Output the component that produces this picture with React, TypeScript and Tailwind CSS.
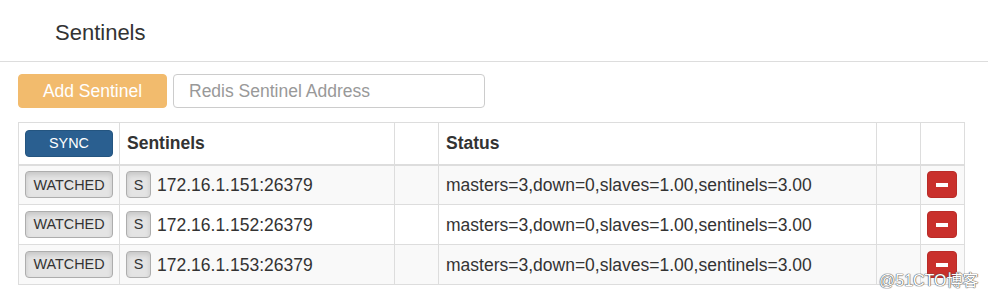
const SENTINELS = [
  { addr: "172.16.1.151:26379", status: "masters=3,down=0,slaves=1.00,sentinels=3.00" },
  { addr: "172.16.1.152:26379", status: "masters=3,down=0,slaves=1.00,sentinels=3.00" },
  { addr: "172.16.1.153:26379", status: "masters=3,down=0,slaves=1.00,sentinels=3.00" },
];

const cell = "border border-[#ddd] px-[6px] py-0 align-middle leading-[20px]";
const bodyCell = `${cell} h-[40px]`;
const headCell = `${cell} h-[42px] border-b-2`;
const grayBtn =
  "block h-[27px] rounded-[4px] border border-[#adadad] bg-[#e4e4e4] text-[14.4px] leading-none text-[#333] shadow-[inset_0_3px_5px_rgba(0,0,0,0.125)]";

const MinusButton = () => (
  <button className="flex h-[27px] w-[30px] items-center justify-center rounded-[4px] border border-[#b92c28] bg-[#c9302c]">
    <span className="block h-[4px] w-[12px] bg-white" />
  </button>
);

export default function App() {
  return (
    <div className="relative h-[300px] w-[988px] bg-white font-['Liberation_Sans',Arial,sans-serif] text-[#333]">
      <div className="h-[62px] border-b border-[#ddd] pl-[55px] pt-[22px]">
        <h1 className="text-[22px] leading-[22px] font-normal">Sentinels</h1>
      </div>

      <div className="mt-[12px] flex gap-[6px] pl-[18px]">
        <button className="h-[34px] w-[149px] rounded-[4px] border border-[#f2bb6d] bg-[#f2bb6d] text-[17.5px] text-white">
          Add Sentinel
        </button>
        <input
          className="h-[34px] w-[312px] rounded-[4px] border border-[#ccc] pl-[15px] text-[17.5px] text-[#555] outline-none placeholder:text-[#999]"
          placeholder="Redis Sentinel Address"
        />
      </div>

      <table className="mt-[14px] ml-[18px] w-[947px] table-fixed border-collapse text-[17.5px]">
        <colgroup>
          <col className="w-[101px]" />
          <col className="w-[275px]" />
          <col className="w-[44px]" />
          <col className="w-[438px]" />
          <col className="w-[44px]" />
          <col className="w-[44px]" />
        </colgroup>
        <thead>
          <tr className="bg-white">
            <th className={`${headCell} text-left`}>
              <button className="block h-[27px] w-[88px] rounded-[4px] border border-[#245580] bg-[#2a5f90] text-[14.4px] leading-none font-normal text-white">
                SYNC
              </button>
            </th>
            <th className={`${headCell} pl-[7px] text-left font-bold`}>Sentinels</th>
            <th className={headCell} />
            <th className={`${headCell} pl-[7px] text-left font-bold`}>Status</th>
            <th className={headCell} />
            <th className={headCell} />
          </tr>
        </thead>
        <tbody>
          {SENTINELS.map((s, i) => (
            <tr key={s.addr} className={i % 2 === 0 ? "bg-[#f9f9f9]" : "bg-white"}>
              <td className={bodyCell}>
                <button className={`${grayBtn} w-[88px]`}>WATCHED</button>
              </td>
              <td className={bodyCell}>
                <div className="flex items-center gap-[6px]">
                  <button className={`${grayBtn} w-[25px]`}>S</button>
                  <span>{s.addr}</span>
                </div>
              </td>
              <td className={bodyCell} />
              <td className={`${bodyCell} pl-[7px]`}>{s.status}</td>
              <td className={bodyCell} />
              <td className={`${bodyCell} pl-[6px]`}>
                <MinusButton />
              </td>
            </tr>
          ))}
        </tbody>
      </table>

      <div className="absolute top-[271px] left-[879px] text-[16px] leading-[20px] text-white [text-shadow:0_0_1px_#555,0_0_1px_#555,0_0_1px_#555] font-['Liberation_Sans','Noto_Sans_CJK_SC',sans-serif]">
        @51CTO博客
      </div>
    </div>
  );
}
